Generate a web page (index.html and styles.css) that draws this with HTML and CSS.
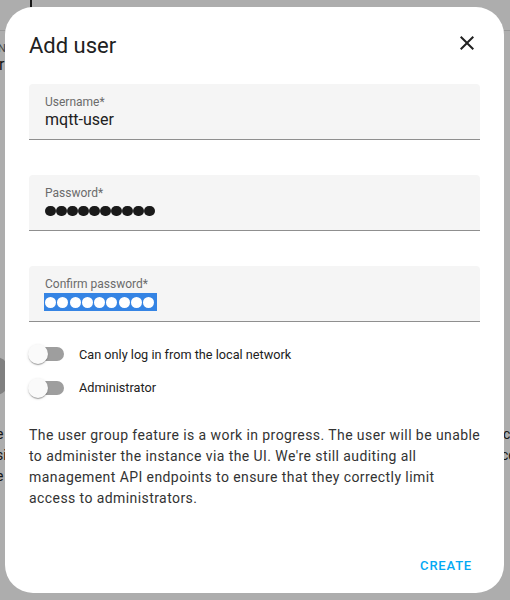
FILE: index.html
```html
<!DOCTYPE html>
<html lang="en">
<head>
<meta charset="utf-8">
<title>Add user</title>
<link rel="stylesheet" href="styles.css">
</head>
<body>
<div class="backdrop">
  <span class="bg-bar"></span>
  <span class="bg-line"></span>
  <div class="bg-frag bg-na">Na</div>
  <div class="bg-frag bg-r">r</div>
  <span class="bg-dark"></span>
  <div class="bg-frag bg-l1">e</div>
  <div class="bg-frag bg-l2">si</div>
  <div class="bg-frag bg-l3">e</div>
  <div class="bg-frag bg-r1">c</div>
  <div class="bg-frag bg-r2">ce</div>
</div>
<div class="scrim"></div>
<div class="dialog">
  <div class="header">
    <h2 class="title">Add user</h2>
    <svg class="close" viewBox="0 0 24 24" width="24" height="24"><path d="M19,6.41L17.590,5L12,10.59L6.41,5L5,6.41L10.59,12L5,17.59L6.41,19L12,13.41L17.59,19L19,17.59L13.41,12L19,6.41Z"/></svg>
  </div>
  <div class="fields">
    <div class="field">
      <div class="label">Username*</div>
      <div class="value">mqtt-user</div>
    </div>
    <div class="field">
      <div class="label">Password*</div>
      <div class="value dots"><i></i><i></i><i></i><i></i><i></i><i></i><i></i><i></i><i></i><i></i></div>
    </div>
    <div class="field">
      <div class="label">Confirm password*</div>
      <div class="value"><span class="selected"><i></i><i></i><i></i><i></i><i></i><i></i><i></i><i></i><i></i></span></div>
    </div>
  </div>
  <div class="switches">
    <div class="switch-row">
      <span class="switch"><span class="track"></span><span class="thumb"></span></span>
      <span class="switch-label">Can only log in from the local network</span>
    </div>
    <div class="switch-row">
      <span class="switch"><span class="track"></span><span class="thumb"></span></span>
      <span class="switch-label">Administrator</span>
    </div>
  </div>
  <p class="note">The user group feature is a work in progress. The user will be unable to administer the instance via the UI. We're still auditing all management API endpoints to ensure that they correctly limit access to administrators.</p>
  <div class="footer">
    <button class="btn">CREATE</button>
  </div>
</div>
</body>
</html>
```
FILE: styles.css
```css
html, body {
  margin: 0;
  padding: 0;
}
body {
  width: 510px;
  height: 600px;
  overflow: hidden;
  position: relative;
  background: #ffffff;
  font-family: Roboto, "Liberation Sans", sans-serif;
}
.backdrop {
  position: absolute;
  inset: 0;
  color: #222;
}
.bg-bar {
  position: absolute;
  left: 30px;
  top: 0;
  width: 2px;
  height: 7px;
  background: #222;
}
.bg-line {
  position: absolute;
  left: 0;
  right: 0;
  top: 30px;
  height: 1px;
  background: #e0e0e0;
}
.bg-frag {
  position: absolute;
  font-size: 14px;
}
.bg-na { left: -2px; top: 42px; font-size: 11px; color: #666; }
.bg-r { left: -1px; top: 55px; font-size: 16px; }
.bg-l1 { left: -4px; top: 426px; }
.bg-l2 { left: -4px; top: 447px; }
.bg-l3 { left: -4px; top: 468px; }
.bg-r1 { left: 503px; top: 426px; }
.bg-r2 { left: 501px; top: 447px; }
.bg-dark {
  position: absolute;
  left: -20px;
  top: 357px;
  width: 30px;
  height: 38px;
  border-radius: 16px;
  background: #bdbdbd;
}
.scrim {
  position: absolute;
  inset: 0;
  background: rgba(0, 0, 0, 0.32);
}
.dialog {
  position: absolute;
  left: 5px;
  top: 7px;
  width: 499px;
  height: 586px;
  box-sizing: border-box;
  background: #fff;
  border-radius: 28px;
  display: flex;
  flex-direction: column;
  padding: 24px 24px 10px 24px;
}
.header {
  display: flex;
  justify-content: space-between;
  align-items: flex-start;
}
.title {
  margin: 0;
  font-size: 22px;
  font-weight: 400;
  line-height: 29px;
  color: #212121;
}
.close {
  fill: #212121;
  margin-right: 1px;
}
.fields {
  display: flex;
  flex-direction: column;
  gap: 35px;
  margin-top: 24px;
}
.field {
  height: 56px;
  box-sizing: border-box;
  background: #f5f5f5;
  border-radius: 4px 4px 0 0;
  border-bottom: 1px solid #8f8f8f;
  padding: 10px 16px 0 16px;
}
.label {
  font-size: 12px;
  line-height: 16px;
  color: #6b6b6b;
}
.value {
  font-size: 16px;
  line-height: 20px;
  height: 20px;
  color: #212121;
  display: flex;
  align-items: center;
}
.dots i {
  display: block;
  width: 10.5px;
  height: 10.5px;
  margin-right: 0.5px;
  border-radius: 50%;
  background: #1a1a1a;
}
.selected {
  display: flex;
  align-items: center;
  height: 18px;
  background: #3584e4;
  padding: 0 1px;
  margin-left: -1px;
}
.selected i {
  display: block;
  width: 11px;
  height: 11px;
  margin-right: 1.3px;
  border-radius: 50%;
  background: #fff;
}
.switches {
  display: flex;
  flex-direction: column;
  gap: 13.5px;
  margin-top: 22px;
}
.switch-row {
  display: flex;
  align-items: center;
  height: 20px;
}
.switch {
  position: relative;
  width: 38px;
  height: 20px;
  margin-left: -1px;
  flex: none;
}
.track {
  position: absolute;
  left: 4px;
  top: 3px;
  width: 32px;
  height: 14px;
  border-radius: 7px;
  background: #9e9e9e;
}
.thumb {
  position: absolute;
  left: 0;
  top: 0;
  width: 20px;
  height: 20px;
  border-radius: 50%;
  background: #fafafa;
  box-shadow: 0 2px 1px -1px rgba(0,0,0,.2), 0 1px 1px 0 rgba(0,0,0,.14), 0 1px 3px 0 rgba(0,0,0,.12);
}
.switch-label {
  margin-left: 13px;
  font-size: 12.7px;
  color: #212121;
}
.note {
  margin: 27px -4.5px 0 0;
  font-size: 14px;
  line-height: 21px;
  letter-spacing: 0.42px;
  color: #333;
}
.footer {
  margin-top: auto;
  display: flex;
  justify-content: flex-end;
}
.btn {
  font-family: inherit;
  border: none;
  background: none;
  height: 36px;
  padding: 0 8px;
  margin-right: 0;
  font-size: 13px;
  font-weight: 500;
  letter-spacing: 0.8px;
  color: #03a9f4;
}
```
